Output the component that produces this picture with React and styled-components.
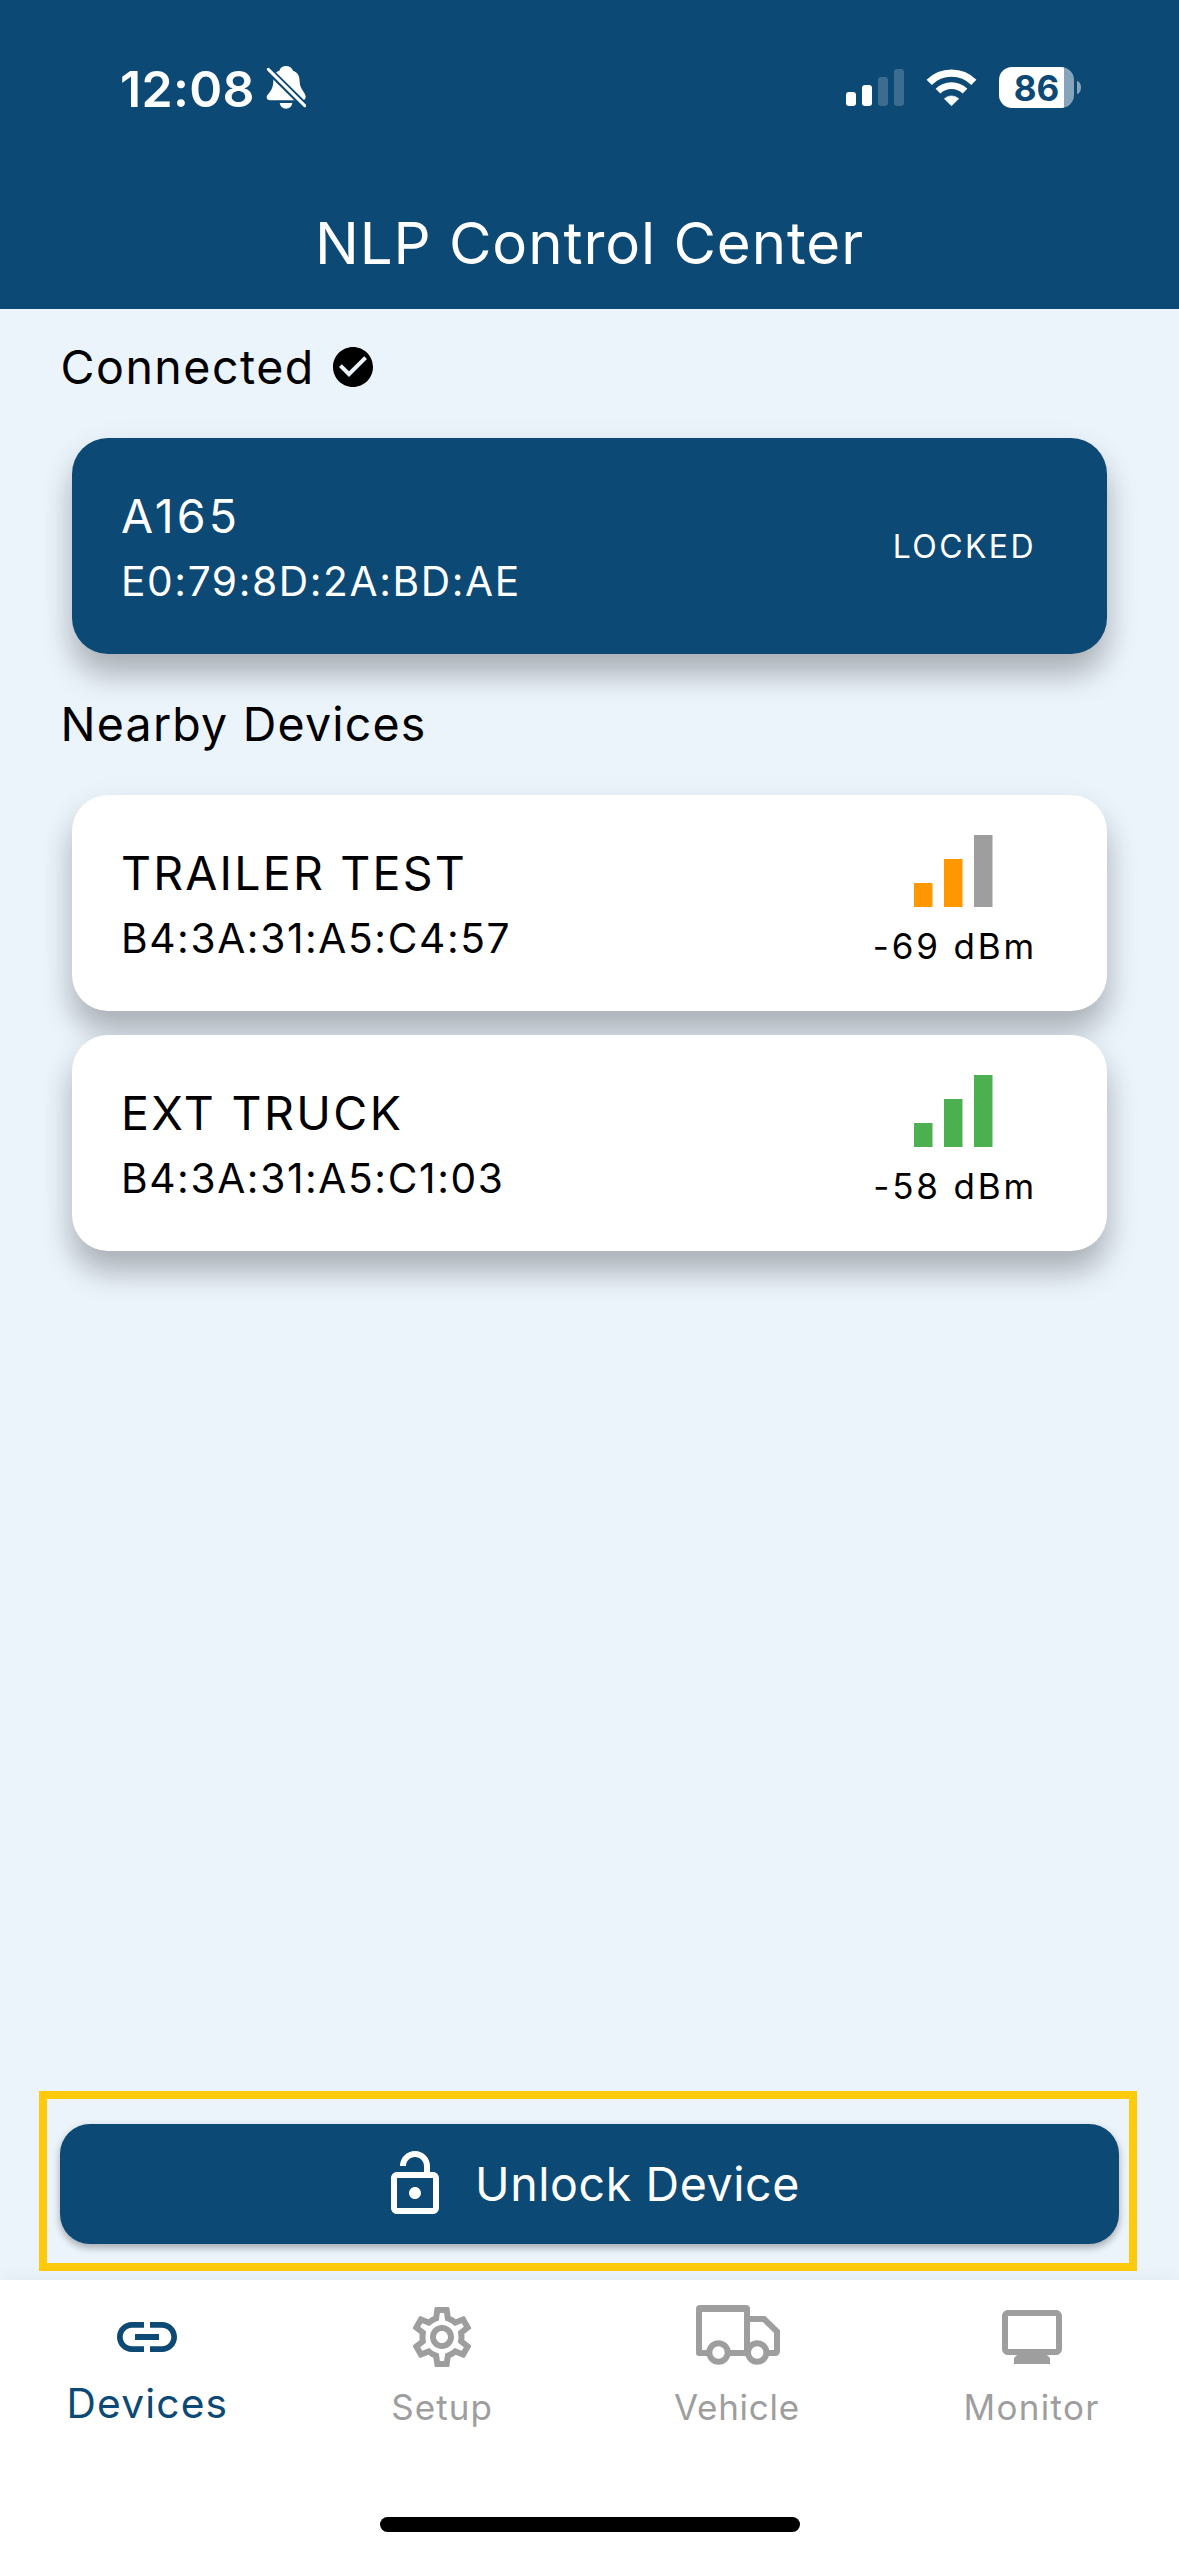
import React from "react";
import styled, { createGlobalStyle } from "styled-components";
import {
  MdCheckCircle,
  MdLink,
  MdMonitor,
  MdOutlineLockOpen,
  MdOutlineSettings,
} from "react-icons/md";

const color = {
  primary: "#0c4975",
  page: "#ebf3fb",
  highlight: "#ffca0c",
  muted: "#9e9e9e",
  orange: "#ff9800",
  green: "#4caf50",
};

const GlobalStyle = createGlobalStyle`
  * { box-sizing: border-box; }
  body { margin: 0; background: ${color.page}; }
`;

const Screen = styled.div`
  display: flex;
  flex-direction: column;
  width: 1179px;
  height: 2556px;
  overflow: hidden;
  background: ${color.page};
  color: #000;
  font-family: Inter, "Liberation Sans", sans-serif;
  font-weight: 400;
  white-space: nowrap;
`;

const Header = styled.header`
  display: flex;
  flex-direction: column;
  height: 309px;
  flex: none;
  background: ${color.primary};
  color: #fff;
`;

const StatusBar = styled.div`
  display: flex;
  align-items: center;
  justify-content: space-between;
  flex: none;
  height: 175px;
  padding: 0 98px 0 120px;
`;

const StatusGroup = styled.div`
  display: flex;
  align-items: center;
  gap: ${(p) => p.$gap}px;
`;

const Clock = styled.span`
  padding-top: 2px;
  font-size: 50px;
  line-height: 60px;
  font-weight: 600;
  letter-spacing: 0.3px;
`;

const Battery = styled.div`
  display: flex;
  align-items: center;
  gap: 3px;
`;

const BatteryBody = styled.div`
  width: 75px;
  height: 41px;
  border-radius: 13px;
  background: linear-gradient(to right, #fff 65px, rgba(255, 255, 255, 0.5) 65px);
  color: ${color.primary};
  font-size: 35px;
  font-weight: 700;
  line-height: 42px;
  text-align: center;
`;

const BatteryTip = styled.div`
  width: 4px;
  height: 13px;
  border-radius: 0 4px 4px 0 / 0 6.5px 6.5px 0;
  background: rgba(255, 255, 255, 0.5);
`;

const Title = styled.h1`
  margin: 0;
  font-size: 58.2px;
  font-weight: 400;
  line-height: 136px;
  letter-spacing: 0.92px;
  text-align: center;
`;

const Content = styled.main`
  display: flex;
  flex-direction: column;
  flex: 1;
`;

const Section = styled.section`
  display: flex;
  flex-direction: column;
  padding: 0 72px 12px;
`;

const SectionTitle = styled.h2`
  display: flex;
  align-items: center;
  gap: 14px;
  height: 116px;
  margin: 0 0 13px -11.4px;
  font-size: 46.5px;
  font-weight: 400;
  line-height: 60px;
  letter-spacing: ${(p) => p.$tracking}px;
`;

const CardList = styled.div`
  display: flex;
  flex-direction: column;
  gap: 24px;
`;

const Card = styled.article`
  display: flex;
  justify-content: space-between;
  height: 216px;
  padding: 0 70px 0 49px;
  border-radius: 36px;
  background: ${(p) => (p.$connected ? color.primary : "#fff")};
  color: ${(p) => (p.$connected ? "#fff" : "#000")};
  box-shadow: 0 21px 30px rgba(0, 4, 0, 0.26), 0 6px 42px rgba(0, 0, 0, 0.035);
`;

const DeviceInfo = styled.div`
  display: flex;
  flex-direction: column;
  gap: 6px;
  padding-top: 48px;
`;

const DeviceName = styled.div`
  font-size: 46.5px;
  line-height: 60px;
  letter-spacing: ${(p) => p.$tracking}px;
`;

const DeviceAddress = styled.div`
  font-size: 40.7px;
  line-height: 60px;
  letter-spacing: 1.6px;
`;

const LockState = styled.div`
  align-self: center;
  padding: 2px 1px 0 0;
  font-size: 32px;
  line-height: 40px;
  letter-spacing: 2.4px;
`;

const Signal = styled.div`
  display: flex;
  flex-direction: column;
  align-items: center;
  gap: 17px;
  padding-top: 40px;
`;

const SignalLabel = styled.div`
  font-size: 35px;
  line-height: 44px;
  letter-spacing: 2.84px;
`;

const Highlight = styled.div`
  width: 1098px;
  height: 180px;
  margin: auto 0 9px 39px;
  padding: 25px 10px 19px 13px;
  border: 8px solid ${color.highlight};
`;

const UnlockButton = styled.button`
  display: flex;
  align-items: center;
  justify-content: center;
  gap: 24px;
  width: 100%;
  height: 120px;
  border: 0;
  padding: 0;
  border-radius: 30px;
  background: ${color.primary};
  color: #fff;
  font: inherit;
  font-size: 46.5px;
  line-height: 60px;
  letter-spacing: 0.6px;
  box-shadow: 0 4px 7px rgba(0, 0, 0, 0.25), 0 2px 12px rgba(0, 0, 0, 0.06);
`;

const BottomBar = styled.footer`
  display: flex;
  flex-direction: column;
  justify-content: space-between;
  align-items: center;
  height: 276px;
  flex: none;
  padding-bottom: 24px;
  background: #fff;
  box-shadow: 0 0 18px rgba(0, 0, 0, 0.05);
`;

const Tabs = styled.nav`
  display: grid;
  grid-template-columns: repeat(4, 1fr);
  width: 100%;
  padding-top: 21px;
`;

const Tab = styled.div`
  display: flex;
  flex-direction: column;
  align-items: center;
  gap: ${(p) => (p.$active ? 6 : 9)}px;
  color: ${(p) => (p.$active ? color.primary : color.muted)};
  font-size: ${(p) => (p.$active ? 40.7 : 35)}px;
  line-height: 50px;
  letter-spacing: ${(p) => p.$tracking}px;
`;

const TabIcon = styled.div`
  display: flex;
  align-items: center;
  justify-content: center;
  height: 72px;
`;

const HomeIndicator = styled.div`
  width: 420px;
  height: 15px;
  border-radius: 8px;
  background: #000;
`;

const SilentBell = () => (
  <svg width="40.7" height="44.7" viewBox="528 78 122 134" fill="#fff">
    <path d="M530 175c0-11 20-17 20-50 0-17 6-26 18-30 2-9 10-14 20-14s18 5 21 14c15 5 20 17 20 33 0 22 17 32 18 44 0 8-3 12-9 12h-98c-6 0-10-3-10-9Z" />
    <path d="M569 192h38c-2 11-9 17-19 17s-17-6-19-17Z" />
    <path d="M535 92L644 200" stroke={color.primary} strokeWidth="21" />
    <path d="M535 91L644 200" stroke="#fff" strokeWidth="9" strokeLinecap="round" />
  </svg>
);

const Cellular = () => (
  <svg width="58" height="37" viewBox="0 0 58 37" fill="#fff">
    <rect x="0" y="23" width="10" height="14" rx="3" />
    <rect x="16" y="16" width="10" height="21" rx="3" />
    <rect x="32" y="8" width="10" height="29" rx="3" opacity=".2" />
    <rect x="48" y="0" width="10" height="37" rx="3" opacity=".2" />
  </svg>
);

const Wifi = () => (
  <svg width="51" height="37.5" viewBox="317.5 86 153 112.5" fill="none" stroke="#fff">
    <path d="M327 126A95 95 0 0 1 461 126" strokeWidth="22" />
    <path d="M353.5 152.5A57.5 57.5 0 0 1 434.5 152.5" strokeWidth="20" />
    <path d="M394 196.5L372.5 175A32 32 0 0 1 415.5 175Z" fill="#fff" strokeWidth="2" strokeLinejoin="round" />
  </svg>
);

const SignalBars = ({ level, tint }) => (
  <svg width="82.5" height="72" viewBox="0 0 82.5 72">
    {[24, 48, 72].map((h, i) => (
      <rect
        key={h}
        x={i * 30}
        y={72 - h}
        width="18.5"
        height={h}
        fill={i < level ? tint : color.muted}
      />
    ))}
  </svg>
);

const Truck = () => (
  <svg width="86" height="64" viewBox="-2 0 86 64" fill="none" stroke="currentColor" strokeWidth="6">
    <path d="M0 4Q0 0 4 0H50Q54 0 54 4V45H48V7H6V45H11V51H3Q0 51 0 48Z" fill="currentColor" stroke="none" />
    <path d="M34 48H50M54 14H68L81 26.5V46Q81 48 79 48H73" />
    <circle cx="22.5" cy="47.5" r="9.2" />
    <circle cx="61.2" cy="47.5" r="9.2" />
  </svg>
);

const nearby = [
  { name: "TRAILER TEST", tracking: 2.2, address: "B4:3A:31:A5:C4:57", dbm: -69, level: 2, tint: color.orange },
  { name: "EXT TRUCK", tracking: 2.4, address: "B4:3A:31:A5:C1:03", dbm: -58, level: 3, tint: color.green },
];

const tabs = [
  { label: "Devices", icon: <MdLink size={72} />, active: true, tracking: 1.2 },
  { label: "Setup", icon: <MdOutlineSettings size={72} />, tracking: 1.07 },
  { label: "Vehicle", icon: <Truck />, tracking: 0.71 },
  { label: "Monitor", icon: <MdMonitor size={72} />, tracking: 1.31 },
];

export default function App() {
  return (
    <Screen>
      <GlobalStyle />
      <Header>
        <StatusBar>
          <StatusGroup $gap={11}>
            <Clock>12:08</Clock>
            <SilentBell />
          </StatusGroup>
          <StatusGroup $gap={22}>
            <Cellular />
            <Wifi />
            <Battery>
              <BatteryBody>86</BatteryBody>
              <BatteryTip />
            </Battery>
          </StatusGroup>
        </StatusBar>
        <Title>NLP Control Center</Title>
      </Header>

      <Content>
        <Section>
          <SectionTitle $tracking={1.48}>
            Connected
            <MdCheckCircle size={48} />
          </SectionTitle>
          <Card $connected>
            <DeviceInfo>
              <DeviceName $tracking={3.2}>A165</DeviceName>
              <DeviceAddress>E0:79:8D:2A:BD:AE</DeviceAddress>
            </DeviceInfo>
            <LockState>LOCKED</LockState>
          </Card>
        </Section>

        <Section>
          <SectionTitle $tracking={1.2}>Nearby Devices</SectionTitle>
          <CardList>
            {nearby.map((d) => (
              <Card key={d.address}>
                <DeviceInfo>
                  <DeviceName $tracking={d.tracking}>{d.name}</DeviceName>
                  <DeviceAddress>{d.address}</DeviceAddress>
                </DeviceInfo>
                <Signal>
                  <SignalBars level={d.level} tint={d.tint} />
                  <SignalLabel>{d.dbm} dBm</SignalLabel>
                </Signal>
              </Card>
            ))}
          </CardList>
        </Section>

        <Highlight>
          <UnlockButton>
            <MdOutlineLockOpen size={72} />
            Unlock Device
          </UnlockButton>
        </Highlight>
      </Content>

      <BottomBar>
        <Tabs>
          {tabs.map((t) => (
            <Tab key={t.label} $active={t.active} $tracking={t.tracking}>
              <TabIcon>{t.icon}</TabIcon>
              <span>{t.label}</span>
            </Tab>
          ))}
        </Tabs>
        <HomeIndicator />
      </BottomBar>
    </Screen>
  );
}
